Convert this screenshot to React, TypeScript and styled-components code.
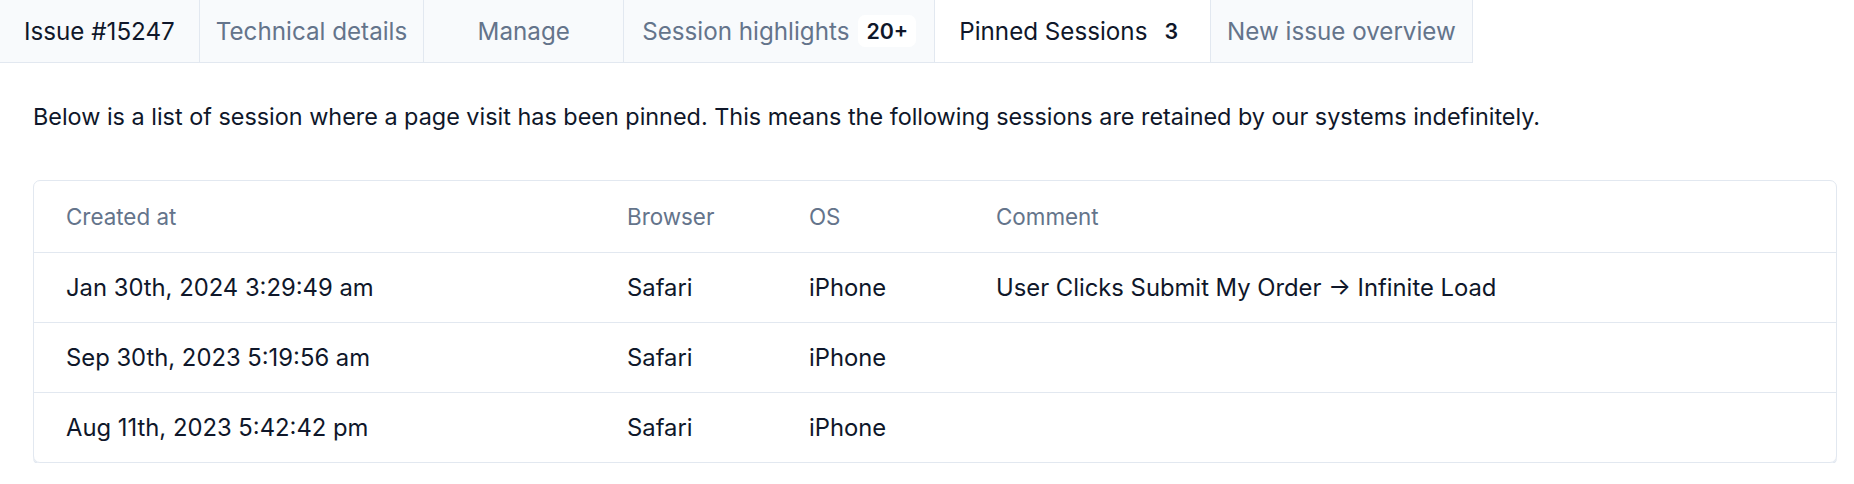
import React from 'react'
import styled, { createGlobalStyle } from 'styled-components'

const GlobalStyle = createGlobalStyle`
  * { box-sizing: border-box; }
  body {
    margin: 0;
    background: #ffffff;
    font-family: Inter, "Noto Sans", sans-serif;
    color: #0f172a;
  }
`

// Tabs
const TabBar = styled.nav`
  display: inline-flex;
  height: 63px;
  background: #f8fafc;
  border-bottom: 1px solid #e2e8f0;
`

const Tab = styled.div<{ $active?: boolean; $first?: boolean; $padX?: number; $minWidth?: number }>`
  display: flex;
  align-items: center;
  justify-content: center;
  gap: 9px;
  min-width: ${(p) => (p.$minWidth ? `${p.$minWidth}px` : 'auto')};
  padding: 0 ${(p) => p.$padX ?? 18}px;
  border-left: ${(p) => (p.$first ? 'none' : '1px solid #e2e8f0')};
  background: ${(p) => (p.$active ? '#ffffff' : 'transparent')};
  color: ${(p) => (p.$active || p.$first ? '#0f172a' : '#64748b')};
  font-size: 24.2px;
  white-space: nowrap;

  &:last-child {
    border-right: 1px solid #e2e8f0;
  }
`

const Count = styled.span`
  display: inline-flex;
  align-items: center;
  justify-content: center;
  min-width: 28px;
  height: 32px;
  padding: 0 8px;
  border-radius: 7px;
  background: #ffffff;
  color: #0f172a;
  font-weight: 600;
  font-size: 21.4px;
`

// Content
const Content = styled.main`
  padding: 38px 17px 0 33px;
`

const Intro = styled.p`
  margin: 0 0 47px;
  font-size: 23.4px;
  line-height: 32px;
`

const Card = styled.div`
  border: 1px solid #e2e8f0;
  border-radius: 7px;
  box-shadow: 0 2px 0 #e2e8f0;
  overflow: hidden;
`

const Table = styled.table`
  width: 100%;
  border-collapse: collapse;
`

const Th = styled.th<{ $width?: string }>`
  width: ${(p) => p.$width || 'auto'};
  height: 71px;
  padding: 0 32px;
  text-align: left;
  font-weight: 400;
  font-size: 22.4px;
  color: #64748b;
  border-bottom: 1px solid #e2e8f0;
`

const Td = styled.td`
  height: 70px;
  padding: 0 32px;
  font-size: 23.8px;
  color: #0f172a;
  border-bottom: 1px solid #e2e8f0;

  tr:last-child > & {
    border-bottom: none;
  }
`

interface ISession {
  created: string
  browser: string
  os: string
  comment: string
}

const sessions: ISession[] = [
  { created: 'Jan 30th, 2024 3:29:49 am', browser: 'Safari', os: 'iPhone', comment: 'User Clicks Submit My Order → Infinite Load' },
  { created: 'Sep 30th, 2023 5:19:56 am', browser: 'Safari', os: 'iPhone', comment: '' },
  { created: 'Aug 11th, 2023 5:42:42 pm', browser: 'Safari', os: 'iPhone', comment: '' },
]

const App: React.FC = () => {
  return (
    <>
      <GlobalStyle />
      <TabBar>
        <Tab $first $padX={24}>Issue #15247</Tab>
        <Tab $padX={16}>Technical details</Tab>
        <Tab $minWidth={200}>Manage</Tab>
        <Tab>
          Session highlights <Count>20+</Count>
        </Tab>
        <Tab $active $padX={24}>
          Pinned Sessions <Count>3</Count>
        </Tab>
        <Tab $padX={16}>New issue overview</Tab>
      </TabBar>
      <Content>
        <Intro>
          Below is a list of session where a page visit has been pinned. This means the following sessions are retained by our systems indefinitely.
        </Intro>
        <Card>
          <Table>
            <thead>
              <tr>
                <Th $width="561px">Created at</Th>
                <Th $width="182px">Browser</Th>
                <Th $width="187px">OS</Th>
                <Th>Comment</Th>
              </tr>
            </thead>
            <tbody>
              {sessions.map((s) => (
                <tr key={s.created}>
                  <Td>{s.created}</Td>
                  <Td>{s.browser}</Td>
                  <Td>{s.os}</Td>
                  <Td>{s.comment}</Td>
                </tr>
              ))}
            </tbody>
          </Table>
        </Card>
      </Content>
    </>
  )
}

export default App
